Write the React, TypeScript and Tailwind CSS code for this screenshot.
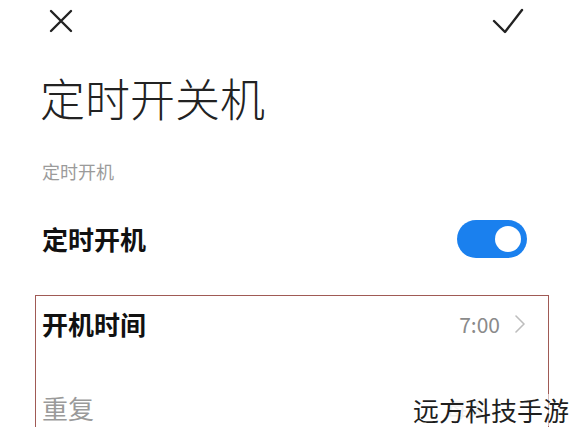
export default function App() {
  return (
    <div
      className="relative h-[427px] w-[569px] overflow-hidden bg-white text-[#111]"
      style={{ fontFamily: '"Noto Sans CJK SC", "Noto Sans", Roboto, sans-serif' }}
    >
      <header className="flex items-center justify-between pl-[49px] pr-[45px] pt-[8px]">
        <svg width="24" height="24" viewBox="0 0 24 24" fill="none" stroke="#222" strokeWidth="2.4" strokeLinecap="round">
          <path d="M2 2L22 22M22 2L2 22" />
        </svg>
        <svg width="32" height="26" viewBox="0 0 32 26" fill="none" stroke="#222" strokeWidth="2.4" strokeLinecap="round" strokeLinejoin="round">
          <path d="M2 13L13 24L30 2" />
        </svg>
      </header>

      <h1 className="mt-[41px] pl-[40px] text-[45px] font-light leading-[45px] text-[#222]">定时开关机</h1>

      <p className="mt-[39px] pl-[42px] text-[18px] leading-[24px] text-[#9b9b9b]">定时开机</p>

      <div className="mt-[37px] flex items-center justify-between pl-[42px] pr-[42px]">
        <span className="text-[26px] font-bold leading-[36px]">定时开机</span>
        <div className="relative h-[38px] w-[70px] rounded-full bg-[#1a80ee]">
          <span className="absolute right-[6px] top-[6px] h-[26px] w-[26px] rounded-full bg-white" />
        </div>
      </div>

      <section className="ml-[35px] mr-[20px] mt-[37px] h-[140px] border-[1.5px] border-b-0 border-[#a05a55]">
        <div className="flex items-center justify-between pl-[6px] pr-[22px] pt-[10px]">
          <span className="text-[26px] font-bold leading-[36px]">开机时间</span>
          <div className="flex items-center gap-[14px] text-[#8a8a8a]">
            <span className="text-[21px] leading-[28px]">7:00</span>
            <svg width="12" height="18" viewBox="0 0 12 18" fill="none" stroke="#bdbdbd" strokeWidth="1.6" strokeLinecap="round" strokeLinejoin="round">
              <path d="M2 1L10 9L2 17" />
            </svg>
          </div>
        </div>
        <div className="mt-[48px] flex items-center justify-between pl-[6px] pr-[60px]">
          <span className="text-[26px] leading-[36px] text-[#9a9a9a]">重复</span>
          <span className="text-[21px] leading-[28px] text-[#d6d6d6]">每天</span>
        </div>
      </section>

      <div className="absolute bottom-[1px] right-0 bg-white/60 text-[26px] leading-[32px] text-[#1e1e1e]">
        远方科技手游
      </div>
    </div>
  )
}
